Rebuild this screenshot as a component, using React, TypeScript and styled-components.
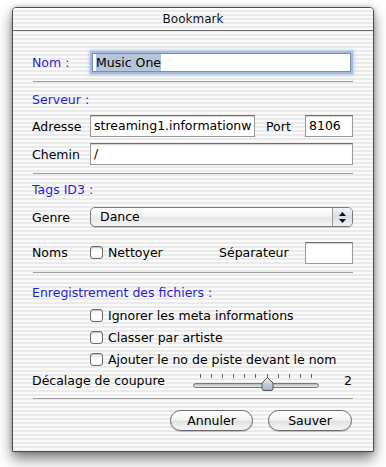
import React from "react";
import styled, { createGlobalStyle } from "styled-components";

const GlobalStyle = createGlobalStyle`
  body {
    margin: 0;
    background: #fff;
    font-family: "DejaVu Sans", "Liberation Sans", sans-serif;
    font-size: 12.5px;
    color: #000;
  }
`;

const stripes = `repeating-linear-gradient(to bottom, #fafafa 0px, #fafafa 2px, #eaeaea 2px, #eaeaea 4px)`;

const Page = styled.div`
  width: 386px;
  height: 467px;
  padding: 7px 0 0 12px;
  box-sizing: border-box;
`;

const Window = styled.div`
  width: 362px;
  height: 445px;
  box-sizing: border-box;
  border: 1px solid #4e4e4e;
  border-radius: 4px 4px 0 0;
  background: ${stripes};
  box-shadow: 0 7px 14px rgba(0, 0, 0, 0.5), 0 0 4px rgba(0, 0, 0, 0.25);
  display: flex;
  flex-direction: column;
`;

const TitleBar = styled.div`
  height: 22px;
  line-height: 22px;
  text-align: center;
  font-size: 12px;
  color: #111;
  border-bottom: 1px solid #6e6e6e;
  border-radius: 3px 3px 0 0;
  box-shadow: inset 0 1px 0 #fff;
`;

const Body = styled.div`
  flex: 1;
  padding: 0 20px 0 19px;
  display: flex;
  flex-direction: column;
`;

const Row = styled.div<{ $mt: number; $h?: number }>`
  display: flex;
  align-items: center;
  margin-top: ${(p) => p.$mt}px;
  height: ${(p) => p.$h ?? 22}px;
`;

const Label = styled.span<{ $w?: number; $blue?: boolean; $push?: boolean }>`
  width: ${(p) => (p.$w ? `${p.$w}px` : "auto")};
  flex-shrink: 0;
  color: ${(p) => (p.$blue ? "#1f1fd8" : "#000")};
  line-height: 15px;
  white-space: nowrap;
  ${(p) => p.$push && "margin-left: auto;"}
`;

const Heading = styled.div<{ $mt: number }>`
  color: #1f1fd8;
  line-height: 15px;
  margin-top: ${(p) => p.$mt}px;
`;

const Divider = styled.div<{ $mt: number }>`
  margin: ${(p) => p.$mt}px 0 0 1px;
  height: 0;
  border-top: 1px solid #9c9c9c;
`;

const TextField = styled.div<{ $w?: number; $focus?: boolean }>`
  ${(p) => (p.$w ? `width: ${p.$w}px;` : "flex: 1;")}
  flex-shrink: 0;
  height: 22px;
  box-sizing: border-box;
  background: #fff;
  border: 1px solid #9a9a9a;
  border-top-color: #6e6e6e;
  box-shadow: inset 0 1px 1px rgba(0, 0, 0, 0.18);
  padding: 0 3px;
  line-height: 20px;
  white-space: nowrap;
  overflow: hidden;
  ${(p) =>
    p.$focus &&
    `
    margin: 0 2px;
    height: 19px;
    line-height: 17px;
    border-color: #7a8ea8;
    box-shadow: 0 0 0 2px #a3bbdd, 0 0 3px 3px rgba(120, 155, 205, 0.45);
  `}
`;

const Selection = styled.span`
  background: #b6c5d9;
  padding: 1px 0;
`;

const Popup = styled.div`
  flex: 1;
  height: 20px;
  box-sizing: border-box;
  display: flex;
  border: 1px solid #7a7a7a;
  border-radius: 5px;
  background: linear-gradient(to bottom, #ffffff 0%, #f4f4f4 45%, #e6e6e6 55%, #f6f6f6 100%);
  box-shadow: 0 1px 1px rgba(0, 0, 0, 0.15);
  overflow: hidden;
`;

const PopupText = styled.span`
  flex: 1;
  padding-left: 9px;
  line-height: 18px;
`;

const PopupArrows = styled.span`
  width: 19px;
  border-left: 1px solid #9a9a9a;
  display: flex;
  flex-direction: column;
  align-items: center;
  justify-content: center;
  gap: 3px;
  background: linear-gradient(to bottom, #f2f4f8 0%, #d8dde6 50%, #eef0f4 100%);
`;

const Box = styled.span`
  width: 13px;
  height: 13px;
  box-sizing: border-box;
  flex-shrink: 0;
  border: 1px solid #6c6c6c;
  border-radius: 3px;
  background: linear-gradient(to bottom, #f0f0f0, #ffffff 60%, #f4f4f4);
  box-shadow: inset 0 1px 1px rgba(0, 0, 0, 0.2);
  margin-right: 5px;
`;

const Check = styled.label`
  display: flex;
  align-items: center;
  line-height: 15px;
  white-space: nowrap;
`;

const CheckList = styled.div`
  margin-top: 4px;
  padding-left: 58px;
`;

const CheckRow = styled.div`
  height: 22px;
  display: flex;
  align-items: center;
`;

const SliderRow = styled.div`
  display: flex;
  align-items: flex-start;
  height: 22px;
`;

const SliderLabel = styled.span`
  width: 161px;
  margin-top: 3px;
  line-height: 15px;
  white-space: nowrap;
`;

const Slider = styled.div`
  position: relative;
  width: 126px;
  height: 22px;
`;

const Ticks = styled.div`
  position: absolute;
  left: 7px;
  right: 7px;
  top: 4px;
  display: flex;
  justify-content: space-between;
`;

const Tick = styled.span`
  width: 1px;
  height: 4px;
  background: #666;
`;

const Track = styled.div`
  position: absolute;
  left: 0;
  right: 0;
  top: 13px;
  height: 5px;
  border-radius: 3px;
  border: 1px solid #777;
  box-sizing: border-box;
  background: linear-gradient(to bottom, #b8b8b8, #e8e8e8);
`;

const Thumb = styled.svg`
  position: absolute;
  top: 7px;
`;

const Value = styled.span`
  margin: 3px 0 0 25px;
  line-height: 15px;
`;

const Buttons = styled.div`
  display: flex;
  justify-content: flex-end;
  gap: 15px;
  margin: 11px 1px 0 0;
`;

const Button = styled.button<{ $w: number }>`
  width: ${(p) => p.$w}px;
  height: 21px;
  box-sizing: border-box;
  border: 1px solid #6a6a6a;
  border-radius: 11px;
  background: linear-gradient(to bottom, #ffffff 0%, #f3f3f3 45%, #e2e2e2 55%, #f5f5f5 100%);
  box-shadow: 0 1px 1px rgba(0, 0, 0, 0.2);
  font-family: inherit;
  font-size: 12.5px;
  color: #000;
  padding: 0;
  line-height: 19px;
`;

const sliderValue = 6;
const tickCount = 11;

export default function App() {
  const thumbLeft = 7 + (sliderValue * (126 - 14)) / (tickCount - 1) - 6;
  return (
    <Page>
      <GlobalStyle />
      <Window>
        <TitleBar>Bookmark</TitleBar>
        <Body>
          <Row $mt={21} $h={21}>
            <Label $w={58} $blue>Nom :</Label>
            <TextField $focus>
              <Selection>Music One</Selection>
            </TextField>
          </Row>
          <Divider $mt={8} />

          <Heading $mt={10}>Serveur :</Heading>
          <Row $mt={8}>
            <Label $w={58}>Adresse</Label>
            <TextField $w={165}>streaming1.informationw</TextField>
            <Label $w={39} $push>Port</Label>
            <TextField $w={48}>8106</TextField>
          </Row>
          <Row $mt={6}>
            <Label $w={58}>Chemin</Label>
            <TextField>/</TextField>
          </Row>
          <Divider $mt={8} />

          <Heading $mt={8}>Tags ID3 :</Heading>
          <Row $mt={10} $h={20}>
            <Label $w={58}>Genre</Label>
            <Popup>
              <PopupText>Dance</PopupText>
              <PopupArrows>
                <svg width="7" height="4" viewBox="0 0 7 4">
                  <polygon points="3.5,0 7,4 0,4" fill="#111" />
                </svg>
                <svg width="7" height="4" viewBox="0 0 7 4">
                  <polygon points="0,0 7,0 3.5,4" fill="#111" />
                </svg>
              </PopupArrows>
            </Popup>
          </Row>
          <Row $mt={15} $h={21}>
            <Label $w={58}>Noms</Label>
            <Check>
              <Box />
              Nettoyer
            </Check>
            <Label $w={86} $push>Séparateur</Label>
            <TextField $w={48} />
          </Row>
          <Divider $mt={9} />

          <Heading $mt={12}>Enregistrement des fichiers :</Heading>
          <CheckList>
            <CheckRow>
              <Check>
                <Box />
                Ignorer les meta informations
              </Check>
            </CheckRow>
            <CheckRow>
              <Check>
                <Box />
                Classer par artiste
              </Check>
            </CheckRow>
            <CheckRow>
              <Check>
                <Box />
                Ajouter le no de piste devant le nom
              </Check>
            </CheckRow>
          </CheckList>
          <SliderRow>
            <SliderLabel>Décalage de coupure</SliderLabel>
            <Slider>
              <Ticks>
                {Array.from({ length: tickCount }, (_, i) => (
                  <Tick key={i} />
                ))}
              </Ticks>
              <Track />
              <Thumb width="13" height="14" viewBox="0 0 13 14" style={{ left: thumbLeft }}>
                <defs>
                  <linearGradient id="thumbFill" x1="0" y1="0" x2="0" y2="1">
                    <stop offset="0" stopColor="#eef2f7" />
                    <stop offset="0.5" stopColor="#c3ccd8" />
                    <stop offset="1" stopColor="#a9b4c4" />
                  </linearGradient>
                </defs>
                <path
                  d="M6.5 0.5 L12 6 L12 11.5 Q12 13.5 10 13.5 L3 13.5 Q1 13.5 1 11.5 L1 6 Z"
                  fill="url(#thumbFill)"
                  stroke="#555"
                  strokeWidth="1"
                />
              </Thumb>
            </Slider>
            <Value>2</Value>
          </SliderRow>
          <Divider $mt={6} />

          <Buttons>
            <Button $w={83}>Annuler</Button>
            <Button $w={84}>Sauver</Button>
          </Buttons>
        </Body>
      </Window>
    </Page>
  );
}
